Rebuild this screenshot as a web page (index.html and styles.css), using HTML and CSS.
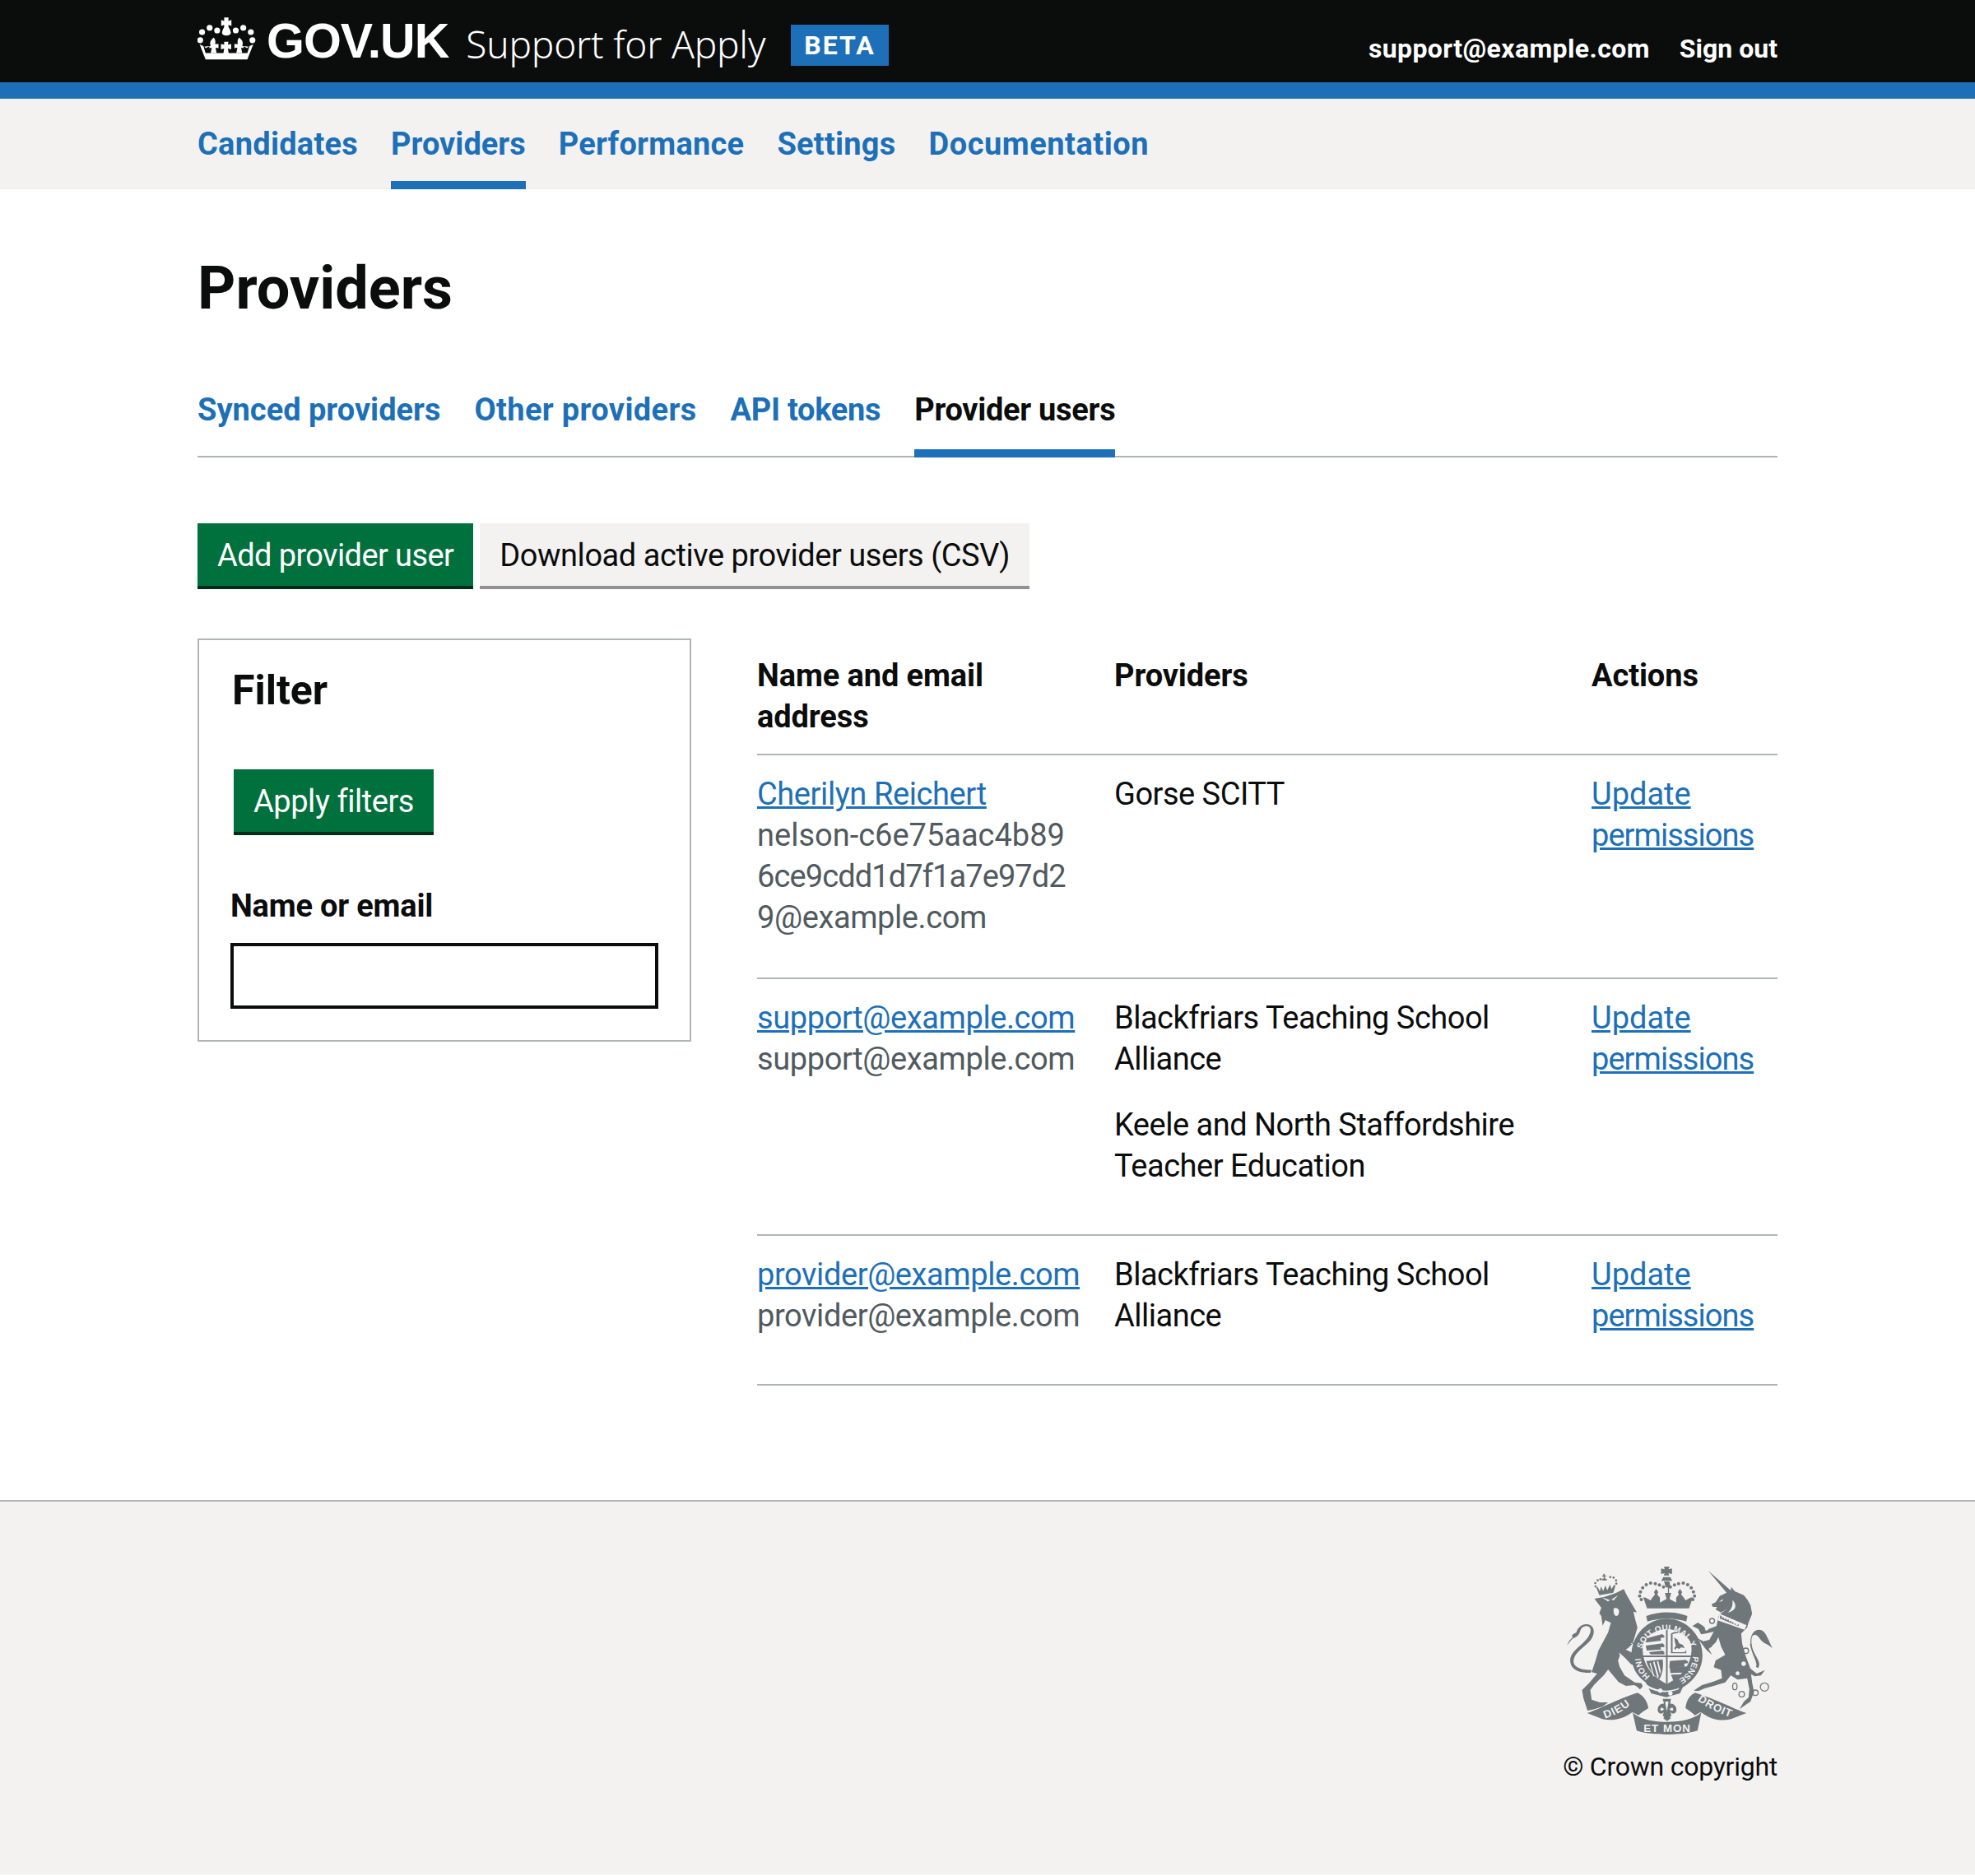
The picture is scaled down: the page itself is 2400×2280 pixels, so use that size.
FILE: index.html
```html
<!DOCTYPE html>
<html lang="en">
<head>
    <meta charset="UTF-8">
    <title>Providers - Support for Apply</title>
    <link rel="stylesheet" href="styles.css">
</head>
<body>
    <header class="site-header">
        <div class="width-container header-inner">
            <div class="header-brand">
                <svg class="crown" viewBox="30 30 220 165" aria-hidden="true">
                    <g fill="#fff">
                        <circle cx="47" cy="88" r="11"/><circle cx="75" cy="72" r="11"/><circle cx="103" cy="82" r="11"/>
                        <circle cx="172" cy="82" r="11"/><circle cx="200" cy="72" r="11"/><circle cx="228" cy="88" r="11"/>
                        <circle cx="40" cy="118" r="11"/><circle cx="234" cy="118" r="11"/>
                        <path d="M129 34h16v13l11-4v22l-11-4v8c6 10 9 18 9 22 0 6-7 10-17 10s-16-4-16-10c0-4 3-12 8-22v-8l-11 4V43l11 4z"/>
                        <path d="M129 124h16l-2 11 12-3v20l-12-3 3 19h-20l3-19-12 3v-20l12 3z"/>
                        <path d="M90 108c6 8 8 14 5 24l13 0v16l-11-2 4 20H79l4-20-10 2 2-8-14 8-6-6 24-3c-5-12-1-21 12-31z"/>
                        <path d="M185 108c-6 8-8 14-5 24h-13v16l11-2-4 20h22l-4-20 10 2-2-8 14 8 6-6-24-3c5-12 1-21-12-31z"/>
                        <path d="M38 134l14 6 8 26h155l8-26 14-6-22 56H60z"/>
                    </g>
                </svg>
                <span class="logo-text">GOV.UK</span>
                <span class="service-name">Support for Apply</span>
                <strong class="phase-tag">BETA</strong>
            </div>
            <nav class="header-links">
                <a href="#">support@example.com</a>
                <a href="#">Sign out</a>
            </nav>
        </div>
    </header>

    <nav class="primary-nav">
        <div class="width-container nav-inner">
            <a href="#">Candidates</a>
            <a href="#" class="current">Providers</a>
            <a href="#">Performance</a>
            <a href="#">Settings</a>
            <a href="#">Documentation</a>
        </div>
    </nav>

    <main class="width-container main">
        <h1>Providers</h1>

        <nav class="sub-nav">
            <a href="#">Synced providers</a>
            <a href="#" class="tab-wide">Other providers</a>
            <a href="#" class="tab-narrow">API tokens</a>
            <a href="#" class="tab-narrow current">Provider users</a>
        </nav>

        <div class="button-row">
            <a href="#" class="button button-add">Add provider user</a>
            <a href="#" class="button button-secondary">Download active provider users (CSV)</a>
        </div>

        <div class="columns">
            <form class="filter">
                <h2>Filter</h2>
                <button type="button" class="button apply">Apply filters</button>
                <label for="q">Name or email</label>
                <input type="text" id="q">
            </form>

            <table>
                <colgroup>
                    <col class="col-name">
                    <col class="col-providers">
                    <col class="col-actions">
                </colgroup>
                <thead>
                    <tr>
                        <th>Name and email<br>address</th>
                        <th>Providers</th>
                        <th>Actions</th>
                    </tr>
                </thead>
                <tbody>
                    <tr>
                        <td>
                            <a href="#">Cherilyn Reichert</a><br>
                            <span class="secondary"><span class="wide">nelson-c6e75aac4b89</span><br><span class="narrow">6ce9cdd1d7f1a7e97d2</span><br>9@example.com</span>
                        </td>
                        <td><p>Gorse SCITT</p></td>
                        <td><a href="#" class="action">Update<br><span class="perm">permissions</span></a></td>
                    </tr>
                    <tr>
                        <td>
                            <a href="#">support@example.com</a><br>
                            <span class="secondary">support@example.com</span>
                        </td>
                        <td>
                            <p>Blackfriars Teaching School<br>Alliance</p>
                            <p>Keele and North Staffordshire<br>Teacher Education</p>
                        </td>
                        <td><a href="#" class="action">Update<br><span class="perm">permissions</span></a></td>
                    </tr>
                    <tr>
                        <td>
                            <a href="#">provider@example.com</a><br>
                            <span class="secondary">provider@example.com</span>
                        </td>
                        <td><p>Blackfriars Teaching School<br>Alliance</p></td>
                        <td><a href="#" class="action">Update<br><span class="perm">permissions</span></a></td>
                    </tr>
                </tbody>
            </table>
        </div>
    </main>

    <footer class="site-footer">
        <div class="width-container footer-inner">
            <svg class="crest" viewBox="130 135 755 615" role="img" aria-label="Royal coat of arms">
                <!-- lion -->
                <g transform="translate(105 120)">
                    <path class="ink" d="M128 135l37-7 40-13 30-15 10 20 17 30 21 35-13-3 8 33 7 25-15 50-10 10 7-1-17 17-8 4 30 15 13 18 15 8 10 20-8 8-10 0-12-9-18-6-22-23-22-20 3 12-7 18 6 22 18 32 37 25 25 3 4 12-10 11-11-11-10-5-30 3-27-14-38-46-15 20-35 35-15 20 5 35 30 10 30 0-20 15-30 10-25 5-15-45-5-30 25-25 30-35-20-5 15-45 10-35 35-65 10-35-20-10-10 20-5-35-7-10 7-20z"/>
                    <path class="ink" d="M28 305c4-14 14-24 22-30-6-2-4-8 2-12l10-5c5-18 20-32 40-30 28 4 30 34 13 57-20 25-60 45-63 75-2 25 28 35 66 35l-4 10c-38 2-74-10-74-45 0-35 45-55 65-85 14-20 12-38-4-40-14-2-24 10-26 22-6 16-20 20-27 24-8 8-14 16-20 24z"/>
                    <path class="paper" d="M155 130l30 10-8 5zM215 122l-25 16 8 3zM198 170c10-4 20 0 20 12 0 10-6 16-10 16s-10-8-10-16z"/>
                    <path class="thin" d="M245 267l55 70"/>
                    <!-- lion's crown -->
                    <path class="ink" d="M146 122l-12-30 6 1 8 15 4-18 8 17 8-20 7 17 10-21 5 17 10-15 5 1-8 27zM155 62h6l1-8h-5l-1-4h5l-1-6h5l1 6h5v4h-5l1 8h5l2 6h-18z"/>
                    <circle class="ink" cx="131" cy="78" r="4"/><circle class="ink" cx="140" cy="68" r="4"/><circle class="ink" cx="150" cy="64" r="4"/>
                    <circle class="ink" cx="132" cy="90" r="4"/><circle class="ink" cx="186" cy="56" r="4"/><circle class="ink" cx="198" cy="58" r="4"/>
                    <circle class="ink" cx="207" cy="68" r="4"/><circle class="ink" cx="208" cy="80" r="4"/>
                </g>

                <!-- royal crown, garter and shield -->
                <g transform="translate(360 120)">
                    <path class="ink" d="M127 18h20l-4 10 13-3v20l-13-3 3 8h-20l3-8-13 3V25l13 3zM124 56h26l7 14h-40zM127 72h20l3 22h-5v20h8l-6 22 24 13 0-18 10-12-4-8 8-12 8 12-4 8 10 12 6 10 18-10 9-1-14 40H65l-14-40 9 1 18 10 6-10 10-12-4-8 8-12 8 12-4 8 10 12 0 18 24-13-6-22h8V94h-5zM62 198c50-18 100-18 150 0l-4 20c-44-14-98-14-142 0z"/>
                    <path class="paper" d="M133 94h8v20h-8z"/>
                    <g class="ink">
                        <circle cx="125" cy="92" r="6"/><circle cx="110" cy="85" r="6"/><circle cx="95" cy="80" r="6"/><circle cx="78" cy="78" r="6"/><circle cx="62" cy="84" r="6"/><circle cx="49" cy="95" r="6"/><circle cx="41" cy="110" r="6"/><circle cx="38" cy="125" r="6"/><circle cx="44" cy="138" r="6"/>
                        <circle cx="150" cy="92" r="6"/><circle cx="165" cy="85" r="6"/><circle cx="180" cy="80" r="6"/><circle cx="197" cy="78" r="6"/><circle cx="213" cy="84" r="6"/><circle cx="226" cy="95" r="6"/><circle cx="234" cy="110" r="6"/><circle cx="238" cy="125" r="6"/><circle cx="232" cy="138" r="6"/>
                    </g>
                    <!-- garter ring, shield cut out of it -->
                    <path class="ink" fill-rule="evenodd" d="M137 208c72 0 130 62 130 134 0 50-30 92-72 116l-10 22-50 14-55-14-20-40C30 420 8 385 8 342 8 270 65 208 137 208zM137 246c-32 0-60 16-76 34-10 12-13 26-12 44 2 52 34 96 88 122 54-26 88-70 90-122 1-18-2-32-12-44-16-18-46-34-78-34z"/>
                    <path class="ink" d="M134 246h6v200h-6zM50 342h175v6H50z"/>
                    <circle class="paper" cx="113" cy="470" r="8"/><circle class="paper" cx="150" cy="480" r="8"/>
                    <path class="paper" d="M63 448c30 22 80 30 120 12l-4 6c-40 16-86 10-118-10z"/>
                    <!-- first and fourth quarter: three lions -->
                    <path class="ink" d="M62 280l58-16 8 6v6l-14 2 2 10-50 6-8 0zM60 306l62-8 6 6v7l-14 1 2 8-52 4zM72 330l50-6 6 6v8H78z"/>
                    <path class="ink" d="M148 362l58-4 8 6v6l-14 2 2 10-50 4-6 0zM148 386l60-4 6 6v6l-14 2 2 8-52 2zM152 412l50-2 2 6-10 12-34 4z"/>
                    <!-- second quarter: rampant lion -->
                    <path class="ink" d="M152 262c14-8 40-12 62 0l-8 2c-16-6-32-6-48 0v66h44l6-8 0 12h-56zM164 276l12 8 6 14 14 6 6 12-12-4-8 6-10-4-2 8-6-6 6-10-4-14z"/>
                    <!-- third quarter: harp -->
                    <path class="ink" d="M62 362l60-6c4 28-2 56-12 72-22-14-38-34-48-66z"/>
                    <path class="paper" d="M78 368l14 52-5-4-13-46zM92 364l16 54-5 6-16-58zM106 362l9 38-3 12-11-48z"/>
                </g>
                <path id="garter-top" class="guide" d="M405.7 439a95 95 0 0 1 182.6 0"/>
                <path id="garter-right" class="guide" d="M592 465a95 95 0 0 1-55 86"/>
                <path id="garter-left" class="guide" d="M436 538a95 95 0 0 1-34-81"/>
                <text class="crest-text"><textPath href="#garter-top">SOIT QUI MAL Y</textPath></text>
                <text class="crest-text"><textPath href="#garter-right">PENSE</textPath></text>
                <text class="crest-text"><textPath href="#garter-left">HONI</textPath></text>

                <!-- unicorn -->
                <g transform="translate(540 120)">
                    <path class="ink" d="M108 33L190 105 192 92 205 108 238 122 252 140 262 158 268 190 262 205 255 222 250 240 228 262 232 300 245 345 262 390 285 408 315 395 300 415 278 418 264 410 268 440 275 475 262 510 240 525 222 538 238 510 255 495 258 465 250 425 215 430 190 415 170 440 130 452 95 462 72 472 55 470 85 450 125 438 158 425 155 395 128 385 135 360 170 340 155 310 145 275 135 295 110 318 122 340 100 320 70 280 90 290 112 285 128 255 100 262 82 265 72 245 50 235 70 222 90 235 102 248 138 235 145 200 150 192 178 170 155 185 135 175 140 165 125 165 120 155 135 148 150 125 175 113z"/>
                    <path class="ink" d="M262 300c-2-30 10-52 32-52 22 0 30 30 48 68-14-14-26-16-36-24-10-10-18-26-28-26-16 0-14 30-8 52 10 30 34 50 20 70l-8-4c8-16-14-40-22-84z"/>
                    <path class="paper" d="M150 190l98 42-8 16-98-34zM196 140c12 10 14 24 6 34-6 6-14 10-24 12 12-8 22-26 18-46zM147 146l16-10-4 8z"/>
                    <path class="ink" d="M152 196l5 2 1 8 6-4 2 8 8-4 1 8 7-4 2 8 7-3 1 8 7-3 2 8 7-3 2 8 10-6-2 8-68-28z"/>
                    <g class="ring">
                        <circle cx="122" cy="216" r="9"/><circle cx="112" cy="302" r="9"/><circle cx="245" cy="325" r="10"/>
                        <ellipse cx="205" cy="455" rx="8" ry="12"/><circle cx="230" cy="483" r="10"/><circle cx="280" cy="478" r="10"/><circle cx="313" cy="457" r="15"/>
                    </g>
                    <circle class="paper" cx="237" cy="372" r="8"/><circle class="paper" cx="215" cy="407" r="7"/><circle class="paper" cx="102" cy="245" r="6"/>
                </g>

                <!-- scroll and fleur -->
                <path class="ink" d="M207 672c30-8 110-50 183-74 22 10 36 32 40 56-12 8-26 16-36 26l-22-12c-34 26-74 34-110 26zM787 672c-30-8-110-50-187-74-22 10-32 32-35 56 12 8 24 16 34 26l22-12c34 26 70 36 110 26z"/>
                <path class="ink" d="M372 668c16 20 62 36 125 36s110-16 126-36l-14 68c-30 10-72 14-112 14s-80-4-110-14z"/>
                <path class="ink" d="M482 620h30l-3 18c14-2 24 10 23 24-1 12-15 16-22 6l4 14-6 4 4 5-14 10-14-10 4-5-6-4 4-14c-7 10-21 6-22-6-1-14 9-26 23-24z"/>
                <path class="paper" d="M491 630h12l-2 14-4 22-4-22zM478 652c-6 2-6 12 0 12 4 0 6-4 10-6zM516 652c6 2 6 12 0 12-4 0-6-4-10-6z"/>
                <path id="ribbon-left" class="guide" d="M272 692c32-10 66-28 96-52"/>
                <path id="ribbon-right" class="guide" d="M608 625c40 30 84 50 132 66"/>
                <text class="crest-text ribbon-text"><textPath href="#ribbon-left">DIEU</textPath></text>
                <text class="crest-text ribbon-text"><textPath href="#ribbon-right">DROIT</textPath></text>
                <text class="crest-text ribbon-text" x="412" y="740">ET MON</text>
            </svg>
            <p class="copyright">© Crown copyright</p>
        </div>
    </footer>
</body>
</html>
```

FILE: styles.css
```css
* {
    box-sizing: border-box;
}
body {
    font-family: Roboto, Arial, sans-serif;
    font-size: 38px;
    line-height: 50px;
    color: #0b0c0c;
    margin: 0;
    padding: 0;
    background-color: #fff;
}
a {
    color: #1d70b8;
}
.width-container {
    width: 1920px;
    margin: 0 auto;
}

/* header */
.site-header {
    background-color: #0b0c0c;
    border-bottom: 20px solid #1d70b8;
    color: #fff;
    height: 120px;
}
.header-inner {
    display: flex;
    justify-content: space-between;
    height: 100px;
}
.header-brand {
    display: flex;
    align-items: center;
}
.crown {
    width: 72px;
    height: 54px;
    margin-right: 12px;
    margin-top: -6px;
}
.logo-text {
    font-family: "Liberation Sans", Arial, sans-serif;
    font-weight: 700;
    font-size: 59px;
    letter-spacing: -1px;
    margin-right: 21px;
    margin-top: 0;
}
.service-name {
    font-family: "Noto Sans", Arial, sans-serif;
    font-weight: 300;
    font-size: 46px;
    letter-spacing: -0.2px;
    margin-right: 31px;
    margin-top: 6px;
}
.phase-tag {
    background-color: #1d70b8;
    font-size: 32px;
    line-height: 50px;
    letter-spacing: 2px;
    padding: 0 16px;
    margin-top: 10px;
}
.header-links {
    display: flex;
    gap: 36px;
    padding-top: 34px;
}
.header-links a {
    color: #fff;
    font-size: 32px;
    font-weight: 700;
    letter-spacing: 0.4px;
    text-decoration: none;
}
.header-links a:last-child {
    letter-spacing: 0;
}

/* primary nav */
.primary-nav {
    background-color: #f3f2f1;
    height: 110px;
}
.nav-inner {
    display: flex;
    gap: 40px;
    height: 110px;
}
.nav-inner a {
    font-weight: 700;
    letter-spacing: 0.25px;
    text-decoration: none;
    padding-top: 30px;
}
.nav-inner a:last-child {
    letter-spacing: 0.5px;
}
.nav-inner a.current {
    letter-spacing: 0;
    border-bottom: 10px solid #1d70b8;
}

/* main */
.main {
    padding-top: 81px;
    padding-bottom: 139px;
}
h1 {
    font-size: 72px;
    line-height: 80px;
    margin: 0 0 82px;
}
.sub-nav {
    display: flex;
    gap: 41px;
    border-bottom: 2px solid #b1b4b6;
    height: 83px;
    margin-bottom: 80px;
}
.sub-nav a {
    font-weight: 700;
    text-decoration: none;
    height: 83px;
}
.sub-nav a.tab-wide {
    letter-spacing: 0.35px;
}
.sub-nav a.tab-narrow {
    letter-spacing: -0.3px;
}
.sub-nav a.current {
    color: #0b0c0c;
    border-bottom: 10px solid #1d70b8;
}
.button-row {
    display: flex;
    gap: 8px;
    margin-bottom: 60px;
}
.button {
    display: block;
    background-color: #00703c;
    color: #fff;
    border: 0;
    border-bottom: 4px solid #002d18;
    font-family: inherit;
    font-size: 38px;
    letter-spacing: -0.45px;
    line-height: 50px;
    height: 80px;
    padding: 14px 24px 12px;
    text-decoration: none;
}
.button-add {
    letter-spacing: -0.6px;
}
.button-secondary {
    background-color: #f3f2f1;
    color: #0b0c0c;
    border-bottom-color: #929191;
}

.columns {
    display: flex;
    align-items: flex-start;
    gap: 80px;
}

/* filter box */
.filter {
    width: 600px;
    border: 2px solid #b1b4b6;
    padding: 31px 38px 38px;
    flex-shrink: 0;
}
h2 {
    font-size: 50px;
    line-height: 60px;
    margin: 0 0 66px;
    padding-left: 2px;
}
.apply {
    margin-left: 4px;
    margin-bottom: 61px;
}
label {
    display: block;
    font-weight: 700;
    letter-spacing: -0.2px;
    margin-bottom: 20px;
}
input {
    display: block;
    width: 520px;
    height: 80px;
    border: 4px solid #0b0c0c;
    background: #fff;
}

/* table */
table {
    width: 1240px;
    border-collapse: collapse;
    table-layout: fixed;
}
.col-name {
    width: 434px;
}
.col-providers {
    width: 580px;
}
.col-actions {
    width: 226px;
}
th, td {
    text-align: left;
    vertical-align: top;
    border-bottom: 2px solid #b1b4b6;
}
th {
    font-weight: 700;
    letter-spacing: -0.1px;
    padding: 20px 0;
}
td {
    letter-spacing: -0.4px;
    padding: 22px 0 48px;
}
td p {
    letter-spacing: -0.5px;
    margin: 0 0 30px;
}
td p:last-child {
    margin-bottom: 10px;
}
.secondary {
    color: #505a5f;
}
.secondary .wide {
    letter-spacing: 0;
}
.secondary .narrow {
    letter-spacing: -0.9px;
}
.action {
    letter-spacing: 0;
}
.action .perm {
    letter-spacing: -0.95px;
}

/* footer */
.site-footer {
    background-color: #f3f2f1;
    border-top: 2px solid #b1b4b6;
    height: 455px;
}
.footer-inner {
    display: flex;
    flex-direction: column;
    align-items: flex-end;
    padding-top: 78px;
}

/* crest */
.crest {
    width: 252px;
    height: 205px;
    margin-right: 5px;
}
.ink {
    fill: #6f777b;
}
.paper {
    fill: #f3f2f1;
}
.thin {
    fill: none;
    stroke: #6f777b;
    stroke-width: 4;
}
.ring {
    fill: none;
    stroke: #6f777b;
    stroke-width: 4;
}
.guide {
    fill: none;
}
.crest-text {
    fill: #f3f2f1;
    font-family: "Liberation Sans", Arial, sans-serif;
    font-weight: 700;
    font-size: 30px;
    letter-spacing: 0.5px;
}
.ribbon-text {
    font-size: 40px;
    letter-spacing: 3px;
}
.copyright {
    font-size: 32px;
    letter-spacing: -0.25px;
    line-height: 40px;
    margin: 19px 0 0;
}
```
